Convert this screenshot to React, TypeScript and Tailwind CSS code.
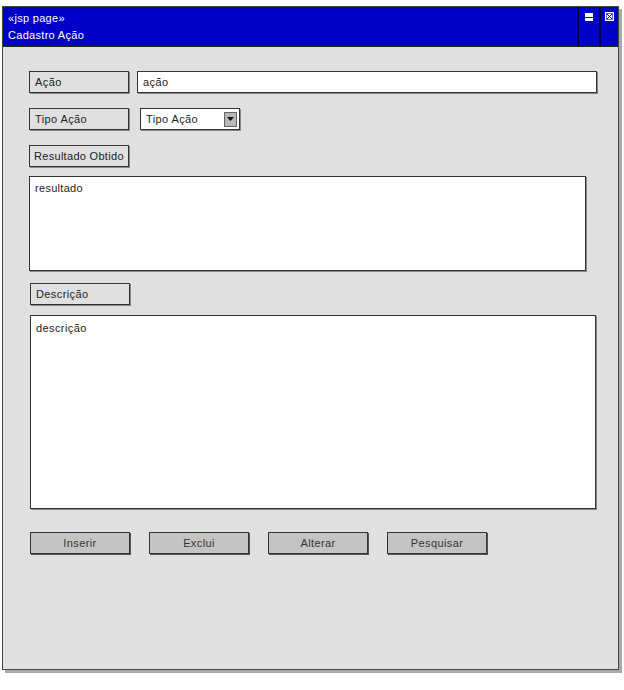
const font = { fontFamily: '"Liberation Sans", Arial, sans-serif' };

function Label({ text, className = "" }: { text: string; className?: string }) {
  return (
    <div
      className={`flex h-[22px] w-[100px] shrink-0 items-center whitespace-nowrap border border-[#333] bg-[#e0e0e0] text-[11px] text-[#222] shadow-[1px_1px_0_#888] ${className}`}
    >
      {text}
    </div>
  );
}

function ActionButton({ text }: { text: string }) {
  return (
    <button className="h-[22px] w-[100px] border border-[#333] bg-[#c4c4c4] text-[11px] tracking-[0.4px] text-[#333] shadow-[1px_1px_0_#555]">
      {text}
    </button>
  );
}

export default function App() {
  return (
    <div className="h-[690px] w-[624px] bg-white pl-[2px] pt-[6px]" style={font}>
      <div className="flex h-[664px] w-[617px] flex-col border border-[#444] bg-[#e0e0e0] shadow-[3px_3px_0_#aaa]">
        {/* title bar */}
        <div className="flex h-[40px] shrink-0 border-b border-[#222] bg-[#0000c8] text-white">
          <div className="flex flex-1 flex-col justify-center gap-[4px] pl-[5px] text-[11px] leading-[13px] tracking-[0.3px]">
            <span>«jsp page»</span>
            <span>Cadastro Ação</span>
          </div>
          <div className="flex w-[22px] justify-center border-l-2 border-[#000030] pt-[6px]">
            <div className="flex h-[8px] w-[8px] flex-col justify-center bg-white">
              <div className="h-[1px] w-full bg-[#0000c8]" />
            </div>
          </div>
          <div className="flex w-[19px] justify-center border-l-2 border-[#000030] pt-[5px]">
            <svg width="9" height="9" viewBox="0 0 9 9">
              <rect x="0.5" y="0.5" width="8" height="8" fill="#fff" stroke="#fff" />
              <path d="M2 2 L7 7 M7 2 L2 7" stroke="#0000c8" strokeWidth="1" />
              <rect x="1.5" y="1.5" width="6" height="6" fill="none" stroke="#0000c8" strokeWidth="0.6" />
            </svg>
          </div>
        </div>

        {/* body */}
        <div className="flex flex-col pl-[26px] pt-[24px] text-[11px] text-[#222]">
          <div className="flex items-center gap-[8px]">
            <Label text="Ação" className="px-[5px] tracking-[0.4px]" />
            <div className="flex h-[22px] w-[460px] items-center border border-[#333] bg-white px-[5px] tracking-[0.4px] shadow-[1px_1px_0_#888]">
              ação
            </div>
          </div>

          <div className="mt-[15px] flex items-center gap-[11px]">
            <Label text="Tipo Ação" className="px-[5px] tracking-[0.4px]" />
            <div className="flex h-[22px] w-[100px] items-center justify-between border border-[#333] bg-white pl-[5px] pr-[2px] tracking-[0.4px] shadow-[1px_1px_0_#888]">
              <span>Tipo Ação</span>
              <div className="flex h-[15px] w-[13px] items-center justify-center border border-[#666] bg-[#b8b8b8]">
                <svg width="7" height="4" viewBox="0 0 7 4">
                  <path d="M0 0 H7 L3.5 4 Z" fill="#111" />
                </svg>
              </div>
            </div>
          </div>

          <Label text="Resultado Obtido" className="mt-[15px] px-[4px] tracking-[0.3px]" />

          <div className="mt-[9px] h-[95px] w-[557px] border border-[#333] bg-white px-[5px] pt-[3px] tracking-[0.3px] shadow-[1px_1px_0_#888]">
            resultado
          </div>

          <Label text="Descrição" className="ml-[1px] mt-[12px] px-[5px] tracking-[0.4px]" />

          <div className="ml-[1px] mt-[10px] h-[194px] w-[566px] border border-[#333] bg-white px-[5px] pt-[4px] tracking-[0.4px] shadow-[1px_1px_0_#888]">
            descrição
          </div>

          <div className="ml-[1px] mt-[23px] flex gap-[19px]">
            <ActionButton text="Inserir" />
            <ActionButton text="Exclui" />
            <ActionButton text="Alterar" />
            <ActionButton text="Pesquisar" />
          </div>
        </div>
      </div>
    </div>
  );
}
